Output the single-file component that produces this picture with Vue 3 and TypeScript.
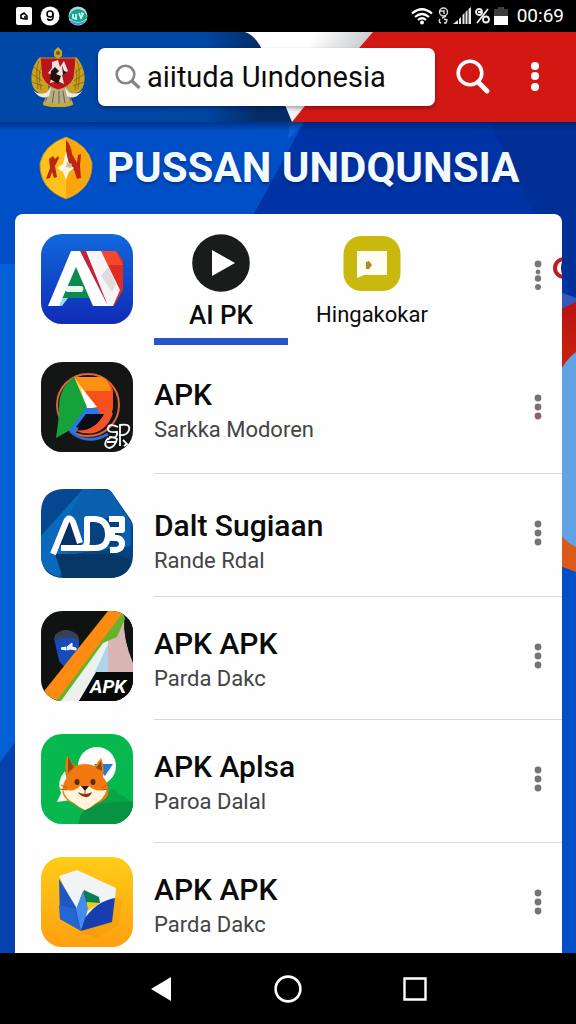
<script setup lang="ts">
import { ref } from 'vue'

interface AppItem {
  id: string
  title: string
  subtitle: string
  low?: boolean
}

const query = ref('aiituda Uındonesia')
const activeTab = ref<'ai' | 'ring'>('ai')

const apps: AppItem[] = [
  { id: 'drive', title: 'APK', subtitle: 'Sarkka Modoren' },
  { id: 'ads', title: 'Dalt Sugiaan', subtitle: 'Rande Rdal', low: true },
  { id: 'flag', title: 'APK APK', subtitle: 'Parda Dakc' },
  { id: 'fox', title: 'APK Aplsa', subtitle: 'Paroa Dalal' },
  { id: 'box', title: 'APK APK', subtitle: 'Parda Dakc' },
]
</script>

<template>
  <div class="page">
    <div class="status">
      <div class="status-left">
        <svg width="16" height="18" viewBox="0 0 16 18" aria-hidden="true">
          <rect width="16" height="18" rx="2" fill="#fff" />
          <path d="M5 12V8l3-2 3 3v3H9V9M5 11l3 1" fill="none" stroke="#000" stroke-width="1.6" />
        </svg>
        <svg width="20" height="20" viewBox="0 0 20 20" aria-hidden="true">
          <circle cx="10" cy="10" r="9.5" fill="#fff" />
          <circle cx="10" cy="8" r="3" fill="none" stroke="#000" stroke-width="1.5" />
          <path d="M13 7v5q-1 3-5 2M7 13l3 1" fill="none" stroke="#000" stroke-width="1.5" />
        </svg>
        <svg width="20" height="20" viewBox="0 0 20 20" aria-hidden="true">
          <circle cx="10" cy="10" r="9.5" fill="#a8dcf0" />
          <path d="M1 12A9 9 0 1 1 19 12Q10 20 1 12z" fill="#17a48c" />
          <path d="M2 14q8 6 16 0a9 9 0 0 1-16 0" fill="#3f96dc" />
          <path d="M5 8v4l3 1V8M11 7l2 5 2-4-2-1" fill="none" stroke="#d9fff5" stroke-width="1.7" />
        </svg>
      </div>
      <div class="status-right">
        <svg width="22" height="17" viewBox="0 0 22 17" fill="none" stroke="#fff" aria-hidden="true">
          <path d="M1 5.5Q11-3 21 5.5M4 9q7-6 14 0M7 12q4-3.5 8 0" stroke-width="2.2" />
          <circle cx="11" cy="14.5" r="2" fill="#fff" stroke="none" />
        </svg>
        <svg width="12" height="18" viewBox="0 0 12 18" fill="none" stroke="#ddd" stroke-width="1.4" aria-hidden="true">
          <circle cx="6.5" cy="5" r="4" /><path d="M2 4h5v3M9 9l-4 2M3 12q-2 3 1 4M7 12l3 1-1 3H7" />
        </svg>
        <svg width="18" height="18" viewBox="0 0 18 18" fill="#e8e8e8" aria-hidden="true">
          <path d="M0 17L5 13v4zM6 12l2-2v7H6zM9.5 8l2-2v11h-2zM12.5 5l2-2v14h-2zM15.5 2L18 0v17h-2.5z" />
        </svg>
        <svg width="15" height="16" viewBox="0 0 15 16" fill="none" stroke="#eee" stroke-width="1.8" aria-hidden="true">
          <circle cx="4" cy="4" r="3" /><circle cx="11" cy="11.5" r="3" /><path d="M13 1L2 15M3 4h3" />
        </svg>
        <svg width="14" height="18" viewBox="0 0 14 18" aria-hidden="true">
          <path d="M0 2h4V0h6v2h4v7H0z" fill="#3d3d3d" /><path d="M0 9h14v9H0z" fill="#fff" />
        </svg>
        <span class="clock">00:69</span>
      </div>
    </div>

    <header class="bar">
      <svg class="backdrop" viewBox="0 0 576 90" preserveAspectRatio="none" aria-hidden="true">
        <defs>
          <linearGradient id="barBlue" x1="0" x2="1">
            <stop offset="0" stop-color="#0048a8" /><stop offset=".7" stop-color="#0046a3" />
            <stop offset=".88" stop-color="#052c68" />
          </linearGradient>
          <linearGradient id="barFold" x1="0" x2="1" y2=".3">
            <stop offset=".5" stop-color="#fff" /><stop offset="1" stop-color="#bfc1c5" />
          </linearGradient>
        </defs>
        <path d="M0 0H576V90H0z" fill="#d31713" />
        <path d="M0 0H246Q258 4 265 22L293 90H0z" fill="url(#barBlue)" />
        <path d="M245 0Q257 4 264 22L292 90 304 75 360 15 373 0z" fill="url(#barFold)" />
      </svg>
      <svg class="emblem" viewBox="0 0 54 60" role="img" aria-label="Garuda">
        <path d="M9 10C2 17-1 28 1 37q2 8 10 10l7-3L14 15z" fill="#c9a21d" />
        <path d="M45 10c7 7 10 18 8 27q-2 8-10 10l-7-3 4-29z" fill="#c9a21d" />
        <path d="M8 14q-4 8-1 28M11 18q-5 8-1 25M3 20l8 7M1 27l10 7M1 35l11 4M46 14q4 8 1 28M43 18q5 8 1 25M51 20l-8 7M53 27l-10 7M53 35l-11 4" fill="none" stroke="#735c16" stroke-width=".7" />
        <path d="M19 39h17l6 18q-15 5-30 0z" fill="#b7ad84" />
        <path d="M18 44l-4 12M23 44l-2 13M28 44v14M32 44l2 13M37 44l3 11" stroke="#67624b" />
        <path d="M13 54q14 5 28 0l1 4q-15 5-30 0z" fill="#c9a92d" />
        <path d="M2 43q6 6 14 2l4-4-2 8q-8 5-16-6M52 43q-6 6-14 2l-4-4 2 8q8 5 16-6" fill="#f4edda" />
        <path d="M9 11h36l-2 20q-4 9-16 12Q15 39 11 30z" fill="#b9151d" stroke="#e3b53b" stroke-width=".7" />
        <path d="M21 15l6-2 2 7 4-6 4 10-6 4 2 9-6-3-8 2 2-8-4-2 4-5z" fill="#eee3dd" />
        <path d="M24 20l4 4-3 3 5 2-3 8-8-5 1-8zM31 18l2 6 3 1-4 3z" fill="#25100d" />
        <path d="M27 0l4 4v5l-4 3-4-3V4z" fill="#c5a71c" />
        <circle cx="27" cy="6" r="2" fill="#66602b" />
      </svg>
      <label class="search">
        <svg width="26" height="26" viewBox="0 0 26 26" fill="none" stroke="#858585" aria-hidden="true">
          <circle cx="10.5" cy="10.5" r="8.8" stroke-width="2.6" /><path d="M17 17l7.5 7" stroke-width="3.2" />
        </svg>
        <input v-model="query" type="text" aria-label="Search" />
      </label>
      <button class="bar-btn search-btn" type="button" aria-label="Search">
        <svg width="34" height="36" viewBox="0 0 34 36" fill="none" stroke="#fff" aria-hidden="true">
          <circle cx="14" cy="14" r="11.8" stroke-width="3.6" /><path d="M22 23l9 9" stroke-width="4.8" stroke-linecap="round" />
        </svg>
      </button>
      <button class="bar-btn more-btn" type="button" aria-label="Menu">
        <svg width="8" height="30" viewBox="0 0 8 30" fill="#fff" aria-hidden="true">
          <circle cx="4" cy="4" r="4" /><circle cx="4" cy="14" r="4" /><circle cx="4" cy="25" r="4" />
        </svg>
      </button>
    </header>

    <main class="content">
      <svg class="backdrop" viewBox="0 0 576 831" preserveAspectRatio="none" aria-hidden="true">
        <defs>
          <linearGradient id="topShade" x2="0" y2="1">
            <stop offset="0" stop-color="#001c60" stop-opacity=".6" /><stop offset="1" stop-color="#001c60" stop-opacity="0" />
          </linearGradient>
          <linearGradient id="flame" x2="0" y2="1">
            <stop offset="0" stop-color="#b91212" /><stop offset=".5" stop-color="#d63a08" /><stop offset="1" stop-color="#dd5a1c" />
          </linearGradient>
        </defs>
        <path d="M0 0H576V831H0z" fill="#004fc6" />
        <path d="M0 142H30V640L0 670z" fill="#0560d8" />
        <path d="M0 640L30 600V831H0z" fill="#0642ae" />
        <path d="M304 0H576V300H140z" fill="#0033a5" />
        <path d="M490 0H576V180z" fill="#002f98" />
        <path d="M290 0h14l-16 18z" fill="#0d5fce" />
        <path d="M550 166l26 10V250H550z" fill="#3458bb" />
        <path d="M550 192L576 180V450L550 440z" fill="url(#flame)" />
        <path d="M550 270q12-30 26-40V425q-18-6-26-34z" fill="#61a4e5" />
        <path d="M550 391q8 26 26 34v24q-20-8-26-22z" fill="#db5a1b" />
        <path d="M0 0H576V9H0z" fill="url(#topShade)" />
      </svg>

      <div class="brand">
        <svg class="brand-mark" viewBox="0 0 54 64" aria-hidden="true">
          <path d="M27 1Q49 9 53 27q1 26-26 36Q0 53 1 27 5 9 27 1z" fill="#ffc21c" stroke="#a98b3c" />
          <path d="M27 2Q48 10 52 28q1 24-25 34z" fill="#f8a50e" />
          <path d="M27 4q5 5 6 14l5 9 1-8 3-1-1 12 1 12-4 1-3-9-6-8-2-9zM10 23l4-3 2 3 3-3 1 2-4 8 2 11-3 1-2-6-2 6-4 1 4-11z" fill="#bd2610" />
          <path d="M27 15l3 13 5 4-5 4-3 8-3-8-6-4 6-4z" fill="#fff5d8" />
          <path d="M28 26l5 2-1 4-5-1z" fill="#c7bc9c" />
        </svg>
        <h1>PUSSAN UNDQUNSIA</h1>
      </div>

      <section class="card">
        <svg class="peek" width="9" height="24" viewBox="0 0 9 24" aria-hidden="true">
          <circle cx="11" cy="12" r="9" fill="#fff" stroke="#c9191e" stroke-width="4" />
          <path d="M9 6q-2 6 0 12z" fill="#20264c" />
        </svg>

        <div class="feature">
          <svg class="icon" viewBox="0 0 92 90" aria-hidden="true">
            <defs>
              <linearGradient id="aiBg" x2="0" y2="1"><stop stop-color="#1268dc" /><stop offset="1" stop-color="#102bb6" /></linearGradient>
            </defs>
            <rect width="92" height="90" rx="21" fill="url(#aiBg)" />
            <path d="M57 17h18l7 9v30l-9 16z" fill="#df2b20" /><path d="M57 17h18l7 14H65z" fill="#f24830" />
            <path d="M34 30l18 34H20z" fill="#0b8b50" />
            <path d="M20 64h7l-6 8h-5z" fill="#8edcf4" />
            <path d="M30 17h11L68 72H52L35 33 18 72H7z" fill="#fff" />
            <path d="M26 52h15q3 3 0 6H26q-4-3 0-6z" fill="#e9f5ee" />
            <path d="M39 17h6l23 50-2 3z" fill="#bd2638" /><path d="M45 17h15l19 39-7 16h-5z" fill="#f6f4f5" />
            <path d="M60 42l7-9 8 17-4 8z" fill="#e0dcde" />
          </svg>
          <div class="tabs" role="tablist">
            <button
              class="tab tab-main" :class="{ active: activeTab === 'ai' }" type="button" role="tab"
              :aria-selected="activeTab === 'ai'" @click="activeTab = 'ai'"
            >
              <svg width="58" height="58" viewBox="0 0 58 58" aria-hidden="true">
                <circle cx="29" cy="29" r="28.8" fill="#1a1c1b" /><path d="M20 16v26l23-13z" fill="#fff" />
              </svg>
              <span>AI PK</span>
            </button>
            <button
              class="tab" :class="{ active: activeTab === 'ring' }" type="button" role="tab"
              :aria-selected="activeTab === 'ring'" @click="activeTab = 'ring'"
            >
              <svg width="58" height="58" viewBox="0 0 58 58" aria-hidden="true">
                <rect x=".5" y="2" width="57" height="55" rx="18" fill="#c9b90e" />
                <path d="M14 17h30v24H21l-7 3z" fill="#fffef2" />
                <path d="M23 28l3-1 3 4-3 4h-3z" fill="#b68a22" />
              </svg>
              <span>Hingakokar</span>
            </button>
          </div>
          <button class="more" type="button" aria-label="More options">
            <svg width="8" height="30" viewBox="0 0 8 30" fill="#777" aria-hidden="true">
              <circle cx="4" cy="4" r="3.4" /><circle cx="4" cy="12" r="2.4" /><circle cx="4" cy="18.5" r="3.2" /><circle cx="4" cy="27" r="3" />
            </svg>
          </button>
        </div>

        <ul class="list">
          <li v-for="app in apps" :key="app.id" class="row">
            <svg v-if="app.id === 'drive'" class="icon" viewBox="0 0 92 90" aria-hidden="true">
              <rect width="92" height="90" rx="21" fill="#141615" />
              <circle cx="47" cy="43" r="31" fill="none" stroke="#e0643c" stroke-width="2" />
              <path d="M29 69q17 15 38 3" fill="none" stroke="#2e6dd8" stroke-width="3" />
              <path d="M33 15h28q8 3 11 13v18H46z" fill="#f5501b" /><path d="M33 15h28q7 3 9 14H42z" fill="#fb9110" />
              <path d="M33 15l22 30-10 2z" fill="#ffd36a" /><path d="M40 25l16 20-12 2z" fill="#fff" />
              <path d="M33 15Q18 26 18 45q0 12-3 31l14-8 17-23z" fill="#15a23b" />
              <path d="M45 46L28 68l6 4 12-20h19l2-6z" fill="#2b79e0" />
              <path d="M56 46h16l-2 8H60z" fill="#f55228" />
              <path d="M45 52h20L55 67q-10 2-20-2z" fill="#080b18" />
              <path d="M64 51h8q-5 16-19 20-10 2-20-3 20 3 30-16z" fill="#f55228" />
              <path d="M77 65q-9-4-10 1t9 4q1 7-8 5M79 84V63q11-2 9 5-2 6-10 5M67 76q-6 8 1 10 6-1 8-9-7-4-9 1M82 78l4 4-3 2M66 80h9" fill="none" stroke="#fff" stroke-width="1.8" />
            </svg>

            <svg v-else-if="app.id === 'ads'" class="icon" viewBox="0 0 92 90" aria-hidden="true">
              <defs><linearGradient id="adBg" x2="1" y2="1"><stop stop-color="#064995" /><stop offset="1" stop-color="#05417e" /></linearGradient></defs>
              <path d="M22 1H65q4 0 7 5L90 32q2 3 2 7V68q-1 20-22 22H22Q1 89 0 68V23Q1 2 22 1z" fill="url(#adBg)" />
              <path d="M42 1L0 48V70Q2 85 18 89L36 65 90 58V34L69 3z" fill="#0869bd" />
              <path d="M42 1L20 42l8 24 62-8V34L69 3z" fill="#0a5fae" /><path d="M14 66h58l18 5q-2 19-22 19H22z" fill="#063767" />
              <path d="M25 32h9l6 26H16z" fill="#063163" /><path d="M48 30h32v28H48z" fill="#064180" />
              <path d="M12 66L25 34q3-7 7 0l7 21M20 60h20q6 0 6-7V31h8q13 1 13 15T54 60H38M68 31h13v11H71v8h5q5 1 5 6t-6 6h-6" fill="none" stroke="#fff" stroke-width="6" stroke-linejoin="round" />
            </svg>

            <svg v-else-if="app.id === 'flag'" class="icon" viewBox="0 0 92 90" aria-hidden="true">
              <defs><clipPath id="flagClip"><rect width="92" height="90" rx="21" /></clipPath></defs>
              <g clip-path="url(#flagClip)">
                <path d="M0 0H92V90H0z" fill="#111312" />
                <path d="M13 27q7-11 25 0v14L27 60 18 50z" fill="#174bb8" /><path d="M14 24q10-10 23 0l1 5q-11-5-24 0z" fill="#354255" />
                <path d="M20 37l5-1v3l-5-1M26 36l5-4v4l4 1v2l-6-1-3 1" fill="#dce9fa" stroke="#fff" />
                <path d="M66 26L83 7Q82 29 92 49V64H40z" fill="#d9b6b3" />
                <path d="M61 32l6-3v32H58L38 90H18z" fill="#edf1ed" /><path d="M67 33v28H54z" fill="#acd4ed" />
                <path d="M82 0L84 8 76 26 62 32 20 90H12z" fill="#64b52c" />
                <path d="M67 0H83L17 88H0V84z" fill="#fd8b12" />
                <path d="M84 8L92 8V52Q82 29 84 8z" fill="#101211" /><path d="M55 61H92V90H38z" fill="#080a09" />
              </g>
              <text x="49" y="82" class="icon-text">APK</text>
            </svg>

            <svg v-else-if="app.id === 'fox'" class="icon" viewBox="0 0 92 90" aria-hidden="true">
              <defs><clipPath id="foxClip"><rect width="92" height="90" rx="21" /></clipPath></defs>
              <g clip-path="url(#foxClip)">
                <path d="M0 0H92V90H0z" fill="#06b84e" /><path d="M72 55q11 8 20 13V90H37Q46 70 72 55z" fill="#08a547" />
                <path d="M40 80Q51 66 92 68V90H37z" fill="#069443" />
                <circle cx="56" cy="32" r="19" fill="#fff" /><path d="M24 37q-9 10-4 22l-4 9 14-2z" fill="#f5f5e9" />
                <path d="M53 30h19l-8 12z" fill="#267bd2" />
                <path d="M26 22l8 10q10-4 20 0l6-8q4 10 2 19 7 8 5 18-3 6-12 9-6 5-11 6-5-1-11-6-9-4-11-10-2-7 4-17-3-11 0-21z" fill="#f47810" />
                <path d="M27 23l6 10-6 6zM60 27l1 10-6-3z" fill="#8f4915" />
                <path d="M22 55q11 4 17-3h9q7 7 18 3-3 10-11 14-6 5-11 7-5-2-11-7-9-4-11-14" fill="#fff5dc" />
                <ellipse cx="36" cy="48" rx="2.5" ry="3" fill="#592b13" /><ellipse cx="52" cy="48" rx="2.5" ry="3" fill="#592b13" />
                <path d="M40 52h8l-4 5z" fill="#291711" /><path d="M37 58q7 4 14 0-2 6-7 5-5-1-7-5z" fill="#98291b" />
                <path d="M44 57v3M20 51l6 3M19 55l7 1M67 51l-6 3M68 55l-7 1" stroke="#ad5b20" />
              </g>
            </svg>

            <svg v-else class="icon" viewBox="0 0 92 90" aria-hidden="true">
              <defs><linearGradient id="boxBg" x2="0" y2="1"><stop stop-color="#fecc17" /><stop offset="1" stop-color="#ff9f10" /></linearGradient></defs>
              <rect width="92" height="90" rx="21" fill="url(#boxBg)" />
              <path d="M40 75l31-11 4-24 6 4-3 24-22 13z" fill="#e59009" opacity=".3" />
              <path d="M18 19l18-6 39 18-1 12-14 3-19 21-8-18z" fill="#f1f4f5" />
              <path d="M39 42l4-9 15 7 1 6-9 1-9 12z" fill="#0b7d52" /><path d="M46 45l13 1-9 6-8 5z" fill="#f1cd17" />
              <path d="M18 22l17 28 6 24-22-12z" fill="#2156c5" /><path d="M35 52l7-18 5 17-3 13-4 10z" fill="#438bed" />
              <path d="M40 74l4-13q12-17 30-20l-3 24z" fill="#183dae" /><path d="M18 48l16 4 6 22-21-12z" fill="#2466d2" />
            </svg>

            <div class="row-main">
              <div class="text" :class="{ low: app.low }">
                <h2>{{ app.title }}</h2>
                <p>{{ app.subtitle }}</p>
              </div>
              <button class="more" type="button" :aria-label="'More options for ' + app.title">
                <svg width="8" height="26" viewBox="0 0 8 26" fill="#747474" aria-hidden="true">
                  <circle cx="4" cy="4" r="3.4" /><circle cx="4" cy="13" r="3.4" />
                  <circle cx="4" cy="22" r="3.4" :class="{ rosy: app.id === 'drive' }" />
                </svg>
              </button>
            </div>
          </li>
        </ul>
      </section>
    </main>

    <nav class="nav">
      <button type="button" aria-label="Back">
        <svg width="20" height="26" viewBox="0 0 20 26" aria-hidden="true"><path d="M0 13L20 1v24z" fill="#fff" /></svg>
      </button>
      <button type="button" aria-label="Home">
        <svg width="28" height="28" viewBox="0 0 28 28" aria-hidden="true"><circle cx="14" cy="14" r="12.4" fill="none" stroke="#fff" stroke-width="2.6" /></svg>
      </button>
      <button type="button" aria-label="Recent apps">
        <svg width="24" height="24" viewBox="0 0 24 24" aria-hidden="true"><path d="M1.5 1.5h21v21h-21z" fill="none" stroke="#fff" stroke-width="2.4" /></svg>
      </button>
    </nav>
  </div>
</template>

<style>
body {
  margin: 0;
  background: #000;
}
</style>

<style scoped>
.page {
  display: flex;
  flex-direction: column;
  min-height: 100vh;
  font-family: Roboto, "Liberation Sans", sans-serif;
  color: #0b0b0b;
}
button {
  padding: 0;
  border: 0;
  background: none;
  font: inherit;
  color: inherit;
  cursor: pointer;
}
svg {
  display: block;
  flex: none;
}
.backdrop {
  position: absolute;
  inset: 0;
  width: 100%;
  height: 100%;
  z-index: -1;
}
.status {
  display: flex;
  justify-content: space-between;
  align-items: center;
  height: 32px;
  padding: 0 12px 0 16px;
  background: #000;
  color: #fff;
}
.status-left {
  display: flex;
  align-items: center;
  gap: 8px;
}
.status-right {
  display: flex;
  align-items: center;
  gap: 4px;
}
.clock {
  padding-left: 5px;
  font-size: 19px;
  line-height: 24px;
}
.bar {
  position: relative;
  z-index: 0;
  display: flex;
  align-items: center;
  height: 90px;
  padding: 0 28px 0 31px;
  box-sizing: border-box;
}
.emblem {
  width: 54px;
  height: 60px;
  margin-right: 13px;
}
.search {
  display: flex;
  align-items: center;
  flex: 1;
  min-width: 0;
  height: 58px;
  padding: 0 12px 0 17px;
  gap: 6px;
  box-sizing: border-box;
  border-radius: 7px;
  background: #fff;
  box-shadow: 0 2px 4px rgba(0, 0, 0, 0.35);
}
.search input {
  flex: 1;
  min-width: 0;
  padding: 0;
  border: 0;
  outline: 0;
  background: none;
  font: 400 29px/40px Roboto, "Liberation Sans", sans-serif;
  color: #0b0b0b;
}
.bar-btn {
  display: grid;
  place-items: center;
  height: 48px;
}
.search-btn {
  width: 36px;
  margin-left: 20px;
}
.more-btn {
  width: 26px;
  margin-left: 31px;
}
.content {
  position: relative;
  z-index: 0;
  display: flex;
  flex: 1;
  flex-direction: column;
  padding: 0 14px 0 15px;
}
.brand {
  display: flex;
  align-items: center;
  gap: 14px;
  height: 92px;
  padding-left: 24px;
}
.brand-mark {
  width: 54px;
  height: 64px;
}
h1 {
  margin: 0;
  font-size: 42px;
  line-height: 48px;
  font-weight: 700;
  white-space: nowrap;
  color: #f3faff;
  text-shadow: 0 2px 3px rgba(0, 20, 80, 0.5);
}
.card {
  position: relative;
  flex: 1;
  overflow: hidden;
  padding-left: 26px;
  border-radius: 8px 8px 0 0;
  background: #fdfefd;
}
.peek {
  position: absolute;
  top: 42px;
  right: 0;
}
.icon {
  width: 92px;
  height: 90px;
}
.icon-text {
  font: italic 700 19px Roboto, "Liberation Sans", sans-serif;
  fill: #fff;
}
.feature {
  display: flex;
  height: 134px;
  padding-top: 20px;
  box-sizing: border-box;
  gap: 21px;
}
.tabs {
  display: flex;
  flex: 1;
  align-items: flex-start;
  gap: 19px;
}
.tab {
  display: flex;
  flex-direction: column;
  align-items: center;
  min-width: 130px;
  height: 111px;
  box-sizing: border-box;
  border-bottom: 7px solid transparent;
  font-size: 22px;
  line-height: 32px;
  gap: 7px;
}
.tab-main {
  min-width: 134px;
  font-size: 26px;
  font-weight: 500;
}
.tab.active {
  border-bottom-color: #2955c8;
}
.more {
  display: grid;
  place-items: center;
  width: 48px;
  height: 90px;
}
.feature .more {
  height: 82px;
}
.list {
  margin: 0;
  padding: 0;
  list-style: none;
}
.row {
  display: flex;
  align-items: flex-start;
  gap: 21px;
  padding-top: 14px;
}
.row-main {
  display: flex;
  flex: 1;
  justify-content: space-between;
  padding-bottom: 18px;
  border-bottom: 1px solid #d6dadc;
}
.row:first-child .row-main {
  padding-bottom: 21px;
}
.row:last-child .row-main {
  padding-bottom: 5px;
  border-bottom: 0;
}
.text {
  align-self: flex-start;
  padding-top: 15px;
}
.text.low {
  align-self: flex-end;
}
h2 {
  margin: 0;
  font-size: 30px;
  line-height: 36px;
  font-weight: 500;
}
p {
  margin: 0;
  font-size: 22px;
  line-height: 34px;
  color: #444;
}
.rosy {
  fill: #93606a;
}
.nav {
  display: grid;
  grid-template-columns: repeat(3, 1fr);
  justify-content: center;
  height: 71px;
  padding: 0 17%;
  background: #000;
}
.nav button {
  display: grid;
  place-items: center;
}
</style>
